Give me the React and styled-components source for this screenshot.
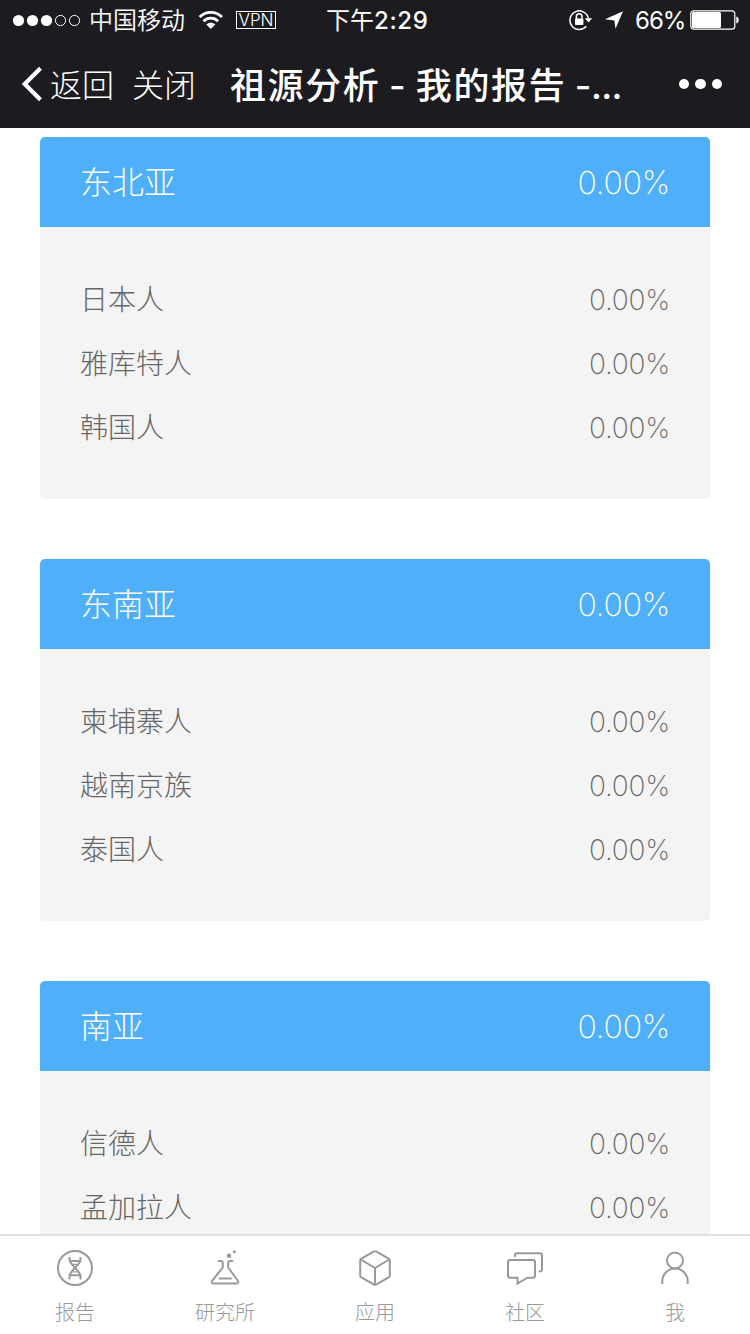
import React from 'react';
import styled, { createGlobalStyle } from 'styled-components';

const GlobalStyle = createGlobalStyle`
  * { box-sizing: border-box; }
  html, body { margin: 0; padding: 0; }
  body {
    background: #fff;
    font-family: Inter, "Noto Sans CJK SC", sans-serif;
    overflow: hidden;
  }
`;

const Screen = styled.div`
  width: 750px;
  height: 1334px;
  display: flex;
  flex-direction: column;
  overflow: hidden;
  background: #fff;
`;

const TopArea = styled.header`
  flex: none;
  height: 128px;
  background: #1c1b20;
  color: #fff;
`;

const StatusBar = styled.div`
  height: 40px;
  display: flex;
  align-items: center;
  padding: 0 11px 0 13px;
  line-height: 40px;
  white-space: nowrap;
  svg { display: block; flex: none; }
`;

const StatusLabel = styled.span`
  flex: none;
  width: ${(p) => p.$width}px;
  margin-left: ${(p) => p.$gap}px;
  padding-top: 2px;
  font-size: 24px;
  font-weight: ${(p) => p.$weight || 400};
  letter-spacing: ${(p) => p.$spacing || 0}px;
`;

const Digits = styled.span`
  font-weight: 500;
  letter-spacing: 0.6px;
`;

const StatusIcon = styled.span`
  flex: none;
  margin-left: ${(p) => p.$gap}px;
`;

const VpnBadge = styled.span`
  flex: none;
  width: 40px;
  height: 18px;
  margin-left: 12px;
  border: 1px solid #fff;
  font-size: 17px;
  font-weight: 300;
  line-height: 16px;
  text-align: center;
`;

const NavBar = styled.div`
  height: 88px;
  display: flex;
  align-items: center;
  padding: 0 28px 0 21px;
  line-height: 88px;
  white-space: nowrap;
  svg { display: block; flex: none; }
`;

const NavAction = styled.span`
  flex: none;
  width: 64px;
  margin-left: ${(p) => p.$gap}px;
  padding-top: 4px;
  font-size: 32px;
  font-weight: 300;
`;

const Title = styled.h1`
  flex: none;
  width: 400px;
  margin: 0 0 0 34px;
  padding-top: 4px;
  font-size: 36px;
  font-weight: 500;
  letter-spacing: 1.6px;
  word-spacing: -2.6px;
`;

const Ellipsis = styled.span`
  letter-spacing: -0.6px;
`;

const MoreDots = styled.span`
  display: flex;
  gap: 6px;
  margin-left: auto;
  i {
    width: 10.5px;
    height: 10.5px;
    border-radius: 50%;
    background: #fff;
  }
`;

const Report = styled.main`
  flex: 1;
  min-height: 0;
  overflow: hidden;
  padding: 9px 40px 0;
  display: flex;
  flex-direction: column;
  gap: 60px;
`;

const Card = styled.section`
  flex: none;
  border-radius: 5px;
  overflow: hidden;
  background: #f4f4f4;
`;

const CardHeader = styled.div`
  height: 90px;
  display: flex;
  align-items: center;
  justify-content: space-between;
  padding: 2px 40px 0;
  background: #4fb0f9;
  color: #fff;
  font-size: 32px;
  font-weight: 300;
  line-height: 88px;
`;

const CardBody = styled.div`
  padding: 40px;
`;

const Row = styled.div`
  height: 64px;
  display: flex;
  align-items: center;
  justify-content: space-between;
  padding-top: 2px;
  color: #666;
  font-size: 28px;
  font-weight: 300;
  line-height: 62px;
`;

const Percent = styled.span`
  font-weight: 200;
  letter-spacing: -0.008em;
`;

const TabBar = styled.nav`
  flex: none;
  height: 100px;
  display: flex;
  border-top: 2px solid #e0e2e5;
  background: #fff;
`;

const Tab = styled.div`
  flex: 1;
  display: flex;
  flex-direction: column;
  align-items: center;
  padding-top: 12px;
  color: #999;
  font-size: 20px;
  font-weight: 300;
  line-height: 30px;
  svg { display: block; margin-bottom: 10px; }
`;

const groups = [
  { name: '东北亚', rows: ['日本人', '雅库特人', '韩国人'] },
  { name: '东南亚', rows: ['柬埔寨人', '越南京族', '泰国人'] },
  { name: '南亚', rows: ['信德人', '孟加拉人'] },
];

const SignalDots = () => (
  <svg width="68" height="14" viewBox="0 0 68 14">
    {[5.5, 19.5, 33.5].map((x) => <circle key={x} cx={x} cy="7.5" r="5.6" fill="#fff" />)}
    {[47.5, 61.5].map((x) => <circle key={x} cx={x} cy="7.5" r="5.1" fill="none" stroke="#fff" />)}
  </svg>
);

const Wifi = () => (
  <svg width="26" height="20" viewBox="0 0 26 20" fill="none" stroke="#fff" strokeWidth="2.8">
    <path d="M1.600 7.100C7.800.8 17.800.8 24 7.100" />
    <path d="M5.500 11.200c4.100-4.100 10.500-4.100 14.600 0" />
    <path d="M12.800 19 8.300 14.600c2.600-2.400 6.400-2.400 9 0z" fill="#fff" stroke="none" />
  </svg>
);

const RotationLock = () => (
  <svg width="24" height="22" viewBox="0 0 24 22" fill="none" stroke="#fff">
    <path d="M19.300 9A9.300 9.300 0 1 0 17.300 17.300" strokeWidth="1.500" />
    <path d="M15.800 9.200h7.400l-3.700 4.300z" fill="#fff" stroke="none" />
    <path d="M7.400 10V7.600a2.800 2.800 0 0 1 5.600 0V10" strokeWidth="1.500" />
    <rect x="6" y="9.500" width="8.400" height="6.400" rx=".6" fill="#fff" stroke="none" />
  </svg>
);

const Location = () => (
  <svg width="19" height="18" viewBox="0 0 19 18" fill="#fff">
    <path d="M18 .2 10.500 17.800 9.400 9.400 0 8.200z" />
  </svg>
);

const Battery = () => (
  <svg width="50" height="20" viewBox="0 0 50 20">
    <rect x=".8" y=".8" width="44" height="18.400" rx="3" fill="none" stroke="#fff" strokeWidth="1.200" />
    <rect x="2" y="2" width="29" height="16" rx="1.500" fill="#fff" />
    <path d="M46.300 6.500c3.200.4 3.200 6.600 0 7z" fill="#fff" />
  </svg>
);

const BackChevron = () => (
  <svg width="22" height="36" viewBox="0 0 22 36" fill="none" stroke="#fff" strokeWidth="4.200">
    <path d="M19.500 2.200 3.700 18l15.800 15.800" />
  </svg>
);

const TabIcon = ({ children }) => (
  <svg width="40" height="40" viewBox="0 0 40 40" fill="none" stroke="#999" strokeWidth="2">
    {children}
  </svg>
);

const ReportIcon = () => (
  <TabIcon>
    <circle cx="20" cy="20" r="17" />
    <path d="M14.500 9v3c0 5 11 10 11 16.500v3M25.500 9v3c0 5-11 10-11 16.500v3M15 13h10M15 27.300h10" />
    <path d="M17 16.300h6M17.500 23.800h5" strokeWidth="1.200" />
  </TabIcon>
);

const LabIcon = () => (
  <TabIcon>
    <path d="M13.300 14q0-1 1-1h1.500q2 0 2 2v4.500L7.300 32.500q-1.500 3 1 3h23.400q2.500 0 1-3L23.200 19.500V15q0-2 2-2h1.500q1 0 1 1" />
    <path d="M13.700 30.500h13" />
    <circle cx="24" cy="7.700" r="2.300" fill="#999" stroke="none" />
    <circle cx="29.400" cy="3.800" r="1.500" fill="#999" stroke="none" />
  </TabIcon>
);

const CubeIcon = () => (
  <TabIcon>
    <path d="M18.500 3.700 6 10.800q-.8.500-.8 1.500v15.400q0 1 .8 1.500l12.500 7.100q1.500.8 3 0L34 29.200q.8-.5.800-1.500V12.300q0-1-.8-1.500L21.500 3.700q-1.500-.8-3 0zM5.700 11.500 20 20l14.300-8.500M20 20v16.700" strokeLinejoin="round" />
  </TabIcon>
);

const ChatIcon = () => (
  <TabIcon>
    <path d="M5.200 12h22.600q2.200 0 2.200 2.200v13.300q0 2.200-2.200 2.200h-5.300l-10 5.800v-5.800H5.200Q3 29.700 3 27.500V14.200Q3 12 5.200 12z" />
    <path d="M9.900 9V7.400q0-2.200 2.200-2.200h22.700q2.200 0 2.200 2.200v13.800q0 2.200-2.200 2.200h-1" />
  </TabIcon>
);

const UserIcon = () => (
  <TabIcon>
    <circle cx="20" cy="12.500" r="8" />
    <path d="M7.300 36v-3a12.700 12.500 0 0 1 25.400 0V36" />
  </TabIcon>
);

const tabs = [
  ['报告', ReportIcon],
  ['研究所', LabIcon],
  ['应用', CubeIcon],
  ['社区', ChatIcon],
  ['我', UserIcon],
];

export default function App() {
  return (
    <Screen>
      <GlobalStyle />
      <TopArea>
        <StatusBar>
          <SignalDots />
          <StatusLabel $width={97} $gap={8} $weight={350}>中国移动</StatusLabel>
          <StatusIcon $gap={12}><Wifi /></StatusIcon>
          <VpnBadge>VPN</VpnBadge>
          <StatusLabel $width={104} $gap={50}>下午<Digits>2:29</Digits></StatusLabel>
          <StatusIcon $gap={139}><RotationLock /></StatusIcon>
          <StatusIcon $gap={12}><Location /></StatusIcon>
          <StatusLabel $width={50} $gap={11} $spacing={-1}>66%</StatusLabel>
          <StatusIcon $gap={5}><Battery /></StatusIcon>
        </StatusBar>
        <NavBar>
          <BackChevron />
          <NavAction $gap={7}>返回</NavAction>
          <NavAction $gap={18}>关闭</NavAction>
          <Title>祖源分析 - 我的报告 <Ellipsis>-...</Ellipsis></Title>
          <MoreDots><i /><i /><i /></MoreDots>
        </NavBar>
      </TopArea>
      <Report>
        {groups.map((group) => (
          <Card key={group.name}>
            <CardHeader><span>{group.name}</span><Percent>0.00%</Percent></CardHeader>
            <CardBody>
              {group.rows.map((row) => (
                <Row key={row}><span>{row}</span><Percent>0.00%</Percent></Row>
              ))}
            </CardBody>
          </Card>
        ))}
      </Report>
      <TabBar>
        {tabs.map(([label, Icon]) => (
          <Tab key={label}><Icon />{label}</Tab>
        ))}
      </TabBar>
    </Screen>
  );
}
